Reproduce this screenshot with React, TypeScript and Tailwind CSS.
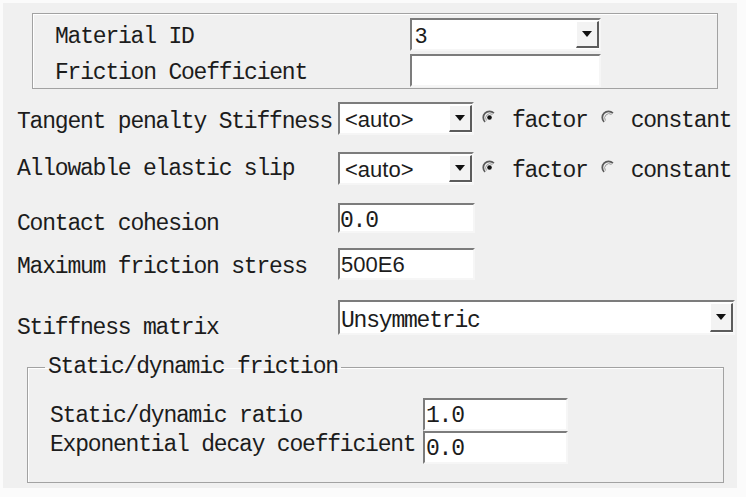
import React from "react"

const mono = "font-['Liberation_Mono',monospace] text-[23px] leading-[24px] tracking-[-1.2px] text-[#1c1c1c] whitespace-nowrap"
const sans = "font-['Liberation_Sans',Arial,sans-serif] text-[22px] leading-[24px] text-[#1c1c1c] whitespace-nowrap"
const sunken =
  "border-2 border-t-[#7c7c7c] border-l-[#7c7c7c] border-r-[#f6f6f6] border-b-[#f6f6f6] bg-white"

function DropButton() {
  return (
    <div className="w-[23px] shrink-0 self-stretch my-[1px] flex items-center justify-center bg-[#f3f3f3] border-t border-l border-t-white border-l-white border-r-2 border-b-2 border-r-[#5c5c5c] border-b-[#5c5c5c]">
      <svg width="10" height="6" viewBox="0 0 10 6">
        <polygon points="0,0 10,0 5,6" fill="#111" />
      </svg>
    </div>
  )
}

function Combo({ value, width, height, textClass, pad }: { value: string; width: string; height: string; textClass: string; pad: string }) {
  return (
    <div className={`${sunken} ${width} ${height} flex items-stretch shrink-0`}>
      <div className={`flex-1 flex items-center ${pad} ${textClass}`}>{value}</div>
      <DropButton />
    </div>
  )
}

function Field({ value, width, height, textClass, pad }: { value: string; width: string; height: string; textClass: string; pad: string }) {
  return (
    <div className={`${sunken} ${width} ${height} flex items-center shrink-0 ${pad}`}>
      <span className={textClass}>{value}</span>
    </div>
  )
}

// classic sunken radio: dark arc on the upper-left half, dot when checked
function Radio({ checked }: { checked?: boolean }) {
  return (
    <svg width="15" height="15" viewBox="0 0 15 15" className="shrink-0">
      <path d="M3.1 11.9 A6.2 6.2 0 0 1 11.9 3.1" fill="none" stroke="#5a5a5a" strokeWidth="1.8" />
      <path d="M4.5 10.5 A4.3 4.3 0 0 1 10.5 4.5" fill="none" stroke="#9a9a9a" strokeWidth="1" />
      {checked && <circle cx="7.5" cy="7.5" r="2.3" fill="#111" />}
    </svg>
  )
}

function RadioPair() {
  return (
    <>
      <div className="ml-[8px] mt-[8px]"><Radio checked /></div>
      <div className={`ml-[15px] mt-[7px] ${mono}`}>factor</div>
      <div className="ml-[13px] mt-[8px]"><Radio /></div>
      <div className={`ml-[15px] mt-[7px] ${mono}`}>constant</div>
    </>
  )
}

export default function App() {
  return (
    <div className="w-[746px] h-[497px] bg-[#fbfbfb] pt-[3px] pl-[3px]">
      <div className="w-[734px] h-[485px] bg-[#f0f0f0] flex flex-col">
        {/* material group */}
        <div className="ml-[29px] mt-[10px] w-[686px] h-[76px] border border-[#a2a2a2] shadow-[inset_1px_1px_0_#ffffff] pt-[4px] pl-[22px] flex flex-col gap-[3px]">
          <div className="flex items-start h-[33px]">
            <div className={`w-[355px] mt-[7px] ${mono}`}>Material ID</div>
            <Combo value="3" width="w-[191px]" height="h-[33px]" textClass={sans} pad="pl-[3px] pt-[2px]" />
          </div>
          <div className="flex items-start h-[33px]">
            <div className={`w-[355px] mt-[7px] ${mono}`}>Friction Coefficient</div>
            <Field value="" width="w-[191px]" height="h-[33px]" textClass={mono} pad="pl-[2px]" />
          </div>
        </div>

        <div className="pl-[14px] flex flex-col">
          <div className="mt-[13px] flex items-start h-[33px]">
            <div className={`w-[321px] mt-[8px] ${mono}`}>Tangent penalty Stiffness</div>
            <Combo value="<auto>" width="w-[136px]" height="h-[33px]" textClass={sans} pad="pl-[5px] pt-[3px]" />
            <RadioPair />
          </div>
          <div className="mt-[17px] flex items-start h-[33px]">
            <div className={`w-[321px] mt-[5px] ${mono}`}>Allowable elastic slip</div>
            <Combo value="<auto>" width="w-[136px]" height="h-[33px]" textClass={sans} pad="pl-[5px] pt-[3px]" />
            <RadioPair />
          </div>
          <div className="mt-[18px] flex items-start h-[30px]">
            <div className={`w-[321px] mt-[9px] ${mono}`}>Contact cohesion</div>
            <Field value="0.0" width="w-[137px]" height="h-[30px]" textClass={mono} pad="pl-[0px] pt-[6px]" />
          </div>
          <div className="mt-[15px] flex items-start h-[32px]">
            <div className={`w-[321px] mt-[7px] ${mono}`}>Maximum friction stress</div>
            <Field value="500E6" width="w-[137px]" height="h-[32px]" textClass={sans} pad="pl-[1px] pt-[2px]" />
          </div>
          <div className="mt-[20px] flex items-start h-[35px]">
            <div className={`w-[321px] mt-[16px] ${mono}`}>Stiffness matrix</div>
            <Combo value="Unsymmetric" width="w-[397px]" height="h-[35px]" textClass={mono} pad="pl-[1px] pt-[6px]" />
          </div>
        </div>

        {/* static/dynamic group */}
        <fieldset className="ml-[24px] mt-[20px] w-[697px] border border-[#a2a2a2] shadow-[inset_1px_1px_0_#ffffff] pt-[19px] pb-[18px]">
          <legend className={`ml-[17px] px-[3px] ${mono}`}>Static/dynamic friction</legend>
          <div className="pl-[22px] flex flex-col">
            <div className="flex items-start h-[33px]">
              <div className={`w-[373px] mt-[6px] ${mono}`}>Static/dynamic ratio</div>
              <Field value="1.0" width="w-[145px]" height="h-[33px]" textClass={mono} pad="pl-[1px] pt-[2px]" />
            </div>
            <div className="flex items-start h-[33px]">
              <div className={`w-[373px] mt-[2px] ${mono}`}>Exponential decay coefficient</div>
              <Field value="0.0" width="w-[145px]" height="h-[33px]" textClass={mono} pad="pl-[1px] pt-[2px]" />
            </div>
          </div>
        </fieldset>
      </div>
    </div>
  )
}
